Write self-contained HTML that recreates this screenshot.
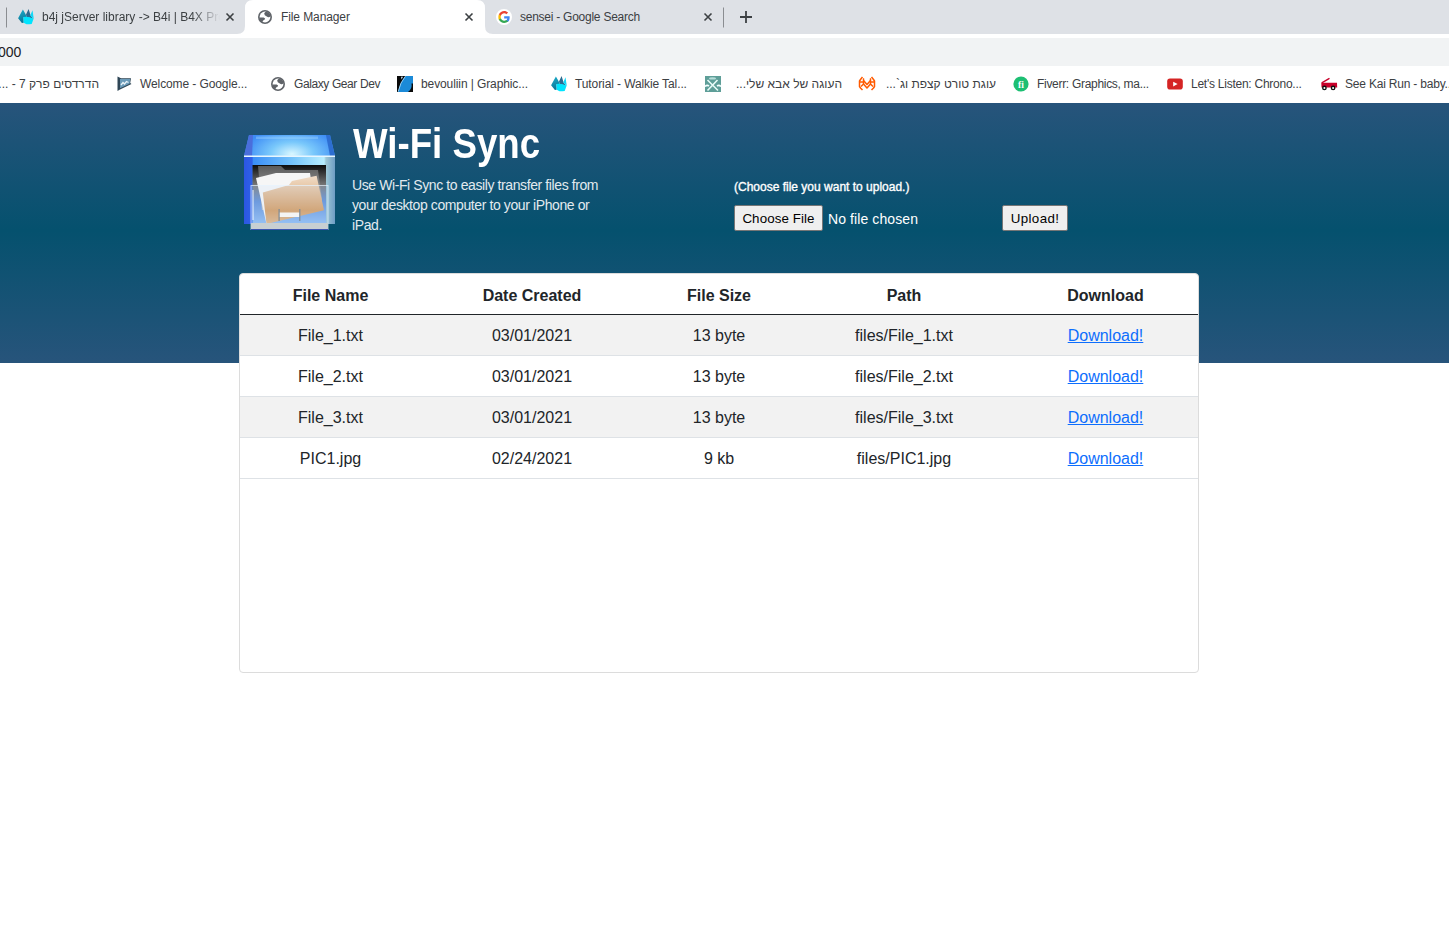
<!DOCTYPE html>
<html><head><meta charset="utf-8">
<style>
*{margin:0;padding:0;box-sizing:border-box}
html,body{width:1449px;height:930px;overflow:hidden;background:#fff;font-family:"Liberation Sans",sans-serif}
.abs{position:absolute;white-space:nowrap}
svg.abs{overflow:visible}
#tabs{position:absolute;left:0;top:0;width:1449px;height:34px;background:#dee1e6}
#addr{position:absolute;left:0;top:38px;width:1449px;height:28px;background:#f1f3f4}
.tt{font-size:12px;line-height:14px;color:#3c4043;top:10px}
.bt{font-size:12px;line-height:14px;color:#3c4043;top:77px}
#hdr{position:absolute;left:0;top:103px;width:1449px;height:260px;background:linear-gradient(to bottom,#27547b 0%,#05516e 49%,#27547b 100%)}
#card{position:absolute;left:239px;top:273px;width:960px;height:400px;background:#fff;border:1px solid #dcdcdc;border-radius:4px;overflow:hidden}
table{border-collapse:collapse;width:958px;font-size:16px;color:#212529;table-layout:fixed}
th{font-weight:bold;height:40px;padding-top:4px;text-align:center;vertical-align:middle;border-bottom:1px solid #212529}
td{height:41px;padding-top:3px;text-align:center;vertical-align:middle;border-bottom:1px solid #dee2e6}
tr.s td{background:#f2f2f2}
td a{color:#0d6efd;text-decoration:underline}
.btn{position:absolute;background:#efefef;border:1px solid #767676;border-radius:2px;font-size:13.33px;color:#000;text-align:center;letter-spacing:0.1px}
</style></head><body>
<!-- ===== Chrome tab strip ===== -->
<div id="tabs"></div>
<svg class="abs" style="left:0;top:0" width="1449" height="38" viewBox="0 0 1449 38">
  <rect x="0" y="34" width="1449" height="4" fill="#fff"/>
  <path d="M237,34 Q245,34 245,26 L245,8 Q245,0 253,0 L477,0 Q485,0 485,8 L485,26 Q485,34 493,34 Z" fill="#fff"/>
  <rect x="6" y="7.5" width="1" height="20" fill="#8a8d91"/>
  <rect x="723" y="7.5" width="1" height="20" fill="#8a8d91"/>
  <!-- close icons -->
  <g stroke="#3c4043" stroke-width="1.6" stroke-linecap="butt">
    <path d="M226.5,13.5 L233.5,20.5 M233.5,13.5 L226.5,20.5"/>
    <path d="M465.5,13.5 L472.5,20.5 M472.5,13.5 L465.5,20.5"/>
    <path d="M704.5,13.5 L711.5,20.5 M711.5,13.5 L704.5,20.5"/>
  </g>
  <path d="M746,11 V23 M740,17 H752" stroke="#3c4043" stroke-width="1.8"/>
</svg>
<!-- tab favicons -->
<svg class="abs" style="left:18px;top:9px" width="16" height="16" viewBox="0 0 16 16">
  <defs><linearGradient id="fl" x1="0" x2="0.3" y1="0" y2="1"><stop offset="0" stop-color="#1cb2cf"/><stop offset="1" stop-color="#0b7597"/></linearGradient></defs>
  <path d="M10.6,0 L8,5.4 L8.6,8.2 L15.4,9.8 L12.7,6.7 Z" fill="#2d6b90"/>
  <path d="M14.5,1.3 L12.2,6.5 L15.8,10.1 Z" fill="#10d8f8"/>
  <path d="M4.9,0.5 L7.5,5.1 L8.6,8 L5.5,8.2 L5.7,13.7 L3.9,13.9 L0.1,9.3 Z" fill="url(#fl)"/>
  <path d="M5.4,8 Q11,7.3 15.6,9.7 L13.7,15 Q10,15.5 8.5,15.2 L5.7,13.7 Z" fill="#00e4fe"/>
</svg>
<svg class="abs" style="left:258px;top:10px" width="14" height="14" viewBox="0 0 14 14">
  <circle cx="7" cy="7" r="7" fill="#5f6368"/>
  <circle cx="7" cy="7" r="5.4" fill="#fff"/>
  <path d="M6.2,3.6 Q6.6,2.3 8.6,1.6 L12.8,4.3 L12.6,6.2 Q11.4,7.4 10.2,7.2 Q9,6.5 8.4,6.2 Q6.3,5.8 6.2,3.6Z" fill="#5f6368"/>
  <path d="M1.4,7.5 L5.6,7.4 Q7.3,8.1 7.1,9.1 Q6.6,10.1 5.2,10.4 Q4.3,11 4.4,12.8 L1.8,11.2 Z" fill="#5f6368"/>
</svg>
<svg class="abs" style="left:496px;top:9px" width="16" height="16" viewBox="0 0 16 16">
  <circle cx="8" cy="8" r="8" fill="#fff"/>
  <g transform="translate(8,8) scale(1.12) translate(-7.85,-7.65)">
  <path d="M12.9,8.1 c0-.4 0-.8-.1-1.1 H8 v2.1 h2.8 c-.1.7-.5 1.2-1 1.6 v1.3 h1.7 c1-.9 1.4-2.3 1.4-3.9z" fill="#4285f4"/>
  <path d="M8,13 c1.4,0 2.6-.5 3.5-1.3 l-1.7-1.3 c-.5.3-1.1.5-1.8.5-1.4,0-2.5-.9-2.9-2.2 H3.3 v1.4 C4.2,11.8 6,13 8,13z" fill="#34a853"/>
  <path d="M5.1,8.7 c-.1-.3-.2-.7-.2-1.1 s.1-.7.2-1.1 V5.1 H3.3 C3,5.8 2.8,6.7 2.8,7.6 s.2,1.8.5,2.5 l1.8-1.4z" fill="#fbbc05"/>
  <path d="M8,4.4 c.8,0 1.5.3 2,.8 l1.5-1.5 C10.6,2.8 9.4,2.3 8,2.3 6,2.3 4.2,3.5 3.3,5.1 l1.8,1.4 C5.5,5.3 6.6,4.4 8,4.4z" fill="#ea4335"/>
  </g>
</svg>
<div class="abs tt" style="left:42px;width:178px;overflow:hidden;-webkit-mask-image:linear-gradient(to right,#000 150px,transparent 178px)">b4j jServer library -&gt; B4i | B4X Pro</div>
<div class="abs tt" style="left:281px;letter-spacing:-0.1px">File Manager</div>
<div class="abs tt" style="left:520px;letter-spacing:-0.25px">sensei - Google Search</div>

<!-- ===== address bar ===== -->
<div id="addr"></div>
<div class="abs" style="left:-2px;top:44px;font-size:14px;line-height:16px;color:#202124">000</div>

<!-- ===== bookmarks bar ===== -->
<div class="abs bt" style="left:-2px;width:101px;text-align:right;direction:rtl">הדרדסים פרק 7 - ...</div>
<svg class="abs" style="left:117px;top:76px" width="16" height="16" viewBox="0 0 16 16">
  <path d="M0.5,0.5 L4,2.2 L14,2.2 L13.2,7 L14.5,8 L3,13.5 L0.5,15 Z" fill="#2f4656"/>
  <path d="M3,3 L13.2,3 L12.6,7.8 L3,12.3 Z" fill="#6a9ab8"/>
  <path d="M4,9 L6,6.5 L7.5,8 L9.5,5.5 L11.5,6.5" stroke="#e8f2f8" stroke-width="1.3" fill="none"/>
</svg>
<div class="abs bt" style="left:140px;letter-spacing:-0.1px">Welcome - Google...</div>
<svg class="abs" style="left:271px;top:77px" width="14" height="14" viewBox="0 0 14 14">
  <circle cx="7" cy="7" r="7" fill="#5f6368"/>
  <circle cx="7" cy="7" r="5.4" fill="#fff"/>
  <path d="M6.2,3.6 Q6.6,2.3 8.6,1.6 L12.8,4.3 L12.6,6.2 Q11.4,7.4 10.2,7.2 Q9,6.5 8.4,6.2 Q6.3,5.8 6.2,3.6Z" fill="#5f6368"/>
  <path d="M1.4,7.5 L5.6,7.4 Q7.3,8.1 7.1,9.1 Q6.6,10.1 5.2,10.4 Q4.3,11 4.4,12.8 L1.8,11.2 Z" fill="#5f6368"/>
</svg>
<div class="abs bt" style="left:294px;letter-spacing:-0.4px">Galaxy Gear Dev</div>
<svg class="abs" style="left:397px;top:76px" width="16" height="16" viewBox="0 0 16 16">
  <rect width="16" height="16" fill="#0a0a0a"/>
  <path d="M8.5,0 L16,0 L16,7.5 L14.5,7.5 Q15.5,13 11,16 L1,16 Q3,6 8.5,0Z" fill="#1b8ad8"/>
  <path d="M1.2,15.6 Q3.2,6.2 8.4,0.3" stroke="#bfe6ff" stroke-width="0.8" fill="none"/>
  <path d="M4,0.8 L6,0.8 L4.5,3.5Z" fill="#cfe7f7"/>
</svg>
<div class="abs bt" style="left:421px;letter-spacing:-0.1px">bevouliin | Graphic...</div>
<svg class="abs" style="left:551px;top:76px" width="16" height="16" viewBox="0 0 16 16">
  <defs><linearGradient id="fl" x1="0" x2="0.3" y1="0" y2="1"><stop offset="0" stop-color="#1cb2cf"/><stop offset="1" stop-color="#0b7597"/></linearGradient></defs>
  <path d="M10.6,0 L8,5.4 L8.6,8.2 L15.4,9.8 L12.7,6.7 Z" fill="#2d6b90"/>
  <path d="M14.5,1.3 L12.2,6.5 L15.8,10.1 Z" fill="#10d8f8"/>
  <path d="M4.9,0.5 L7.5,5.1 L8.6,8 L5.5,8.2 L5.7,13.7 L3.9,13.9 L0.1,9.3 Z" fill="url(#fl)"/>
  <path d="M5.4,8 Q11,7.3 15.6,9.7 L13.7,15 Q10,15.5 8.5,15.2 L5.7,13.7 Z" fill="#00e4fe"/>
</svg>
<div class="abs bt" style="left:575px;letter-spacing:-0.1px">Tutorial - Walkie Tal...</div>
<svg class="abs" style="left:705px;top:76px" width="16" height="16" viewBox="0 0 16 16">
  <rect width="16" height="16" fill="#5e9e98"/>
  <ellipse cx="7.5" cy="2.4" rx="3.5" ry="1.2" fill="#b5dcd8"/>
  <path d="M2.5,4 L13,14.5 M12.5,4 L2.5,14.5" stroke="#e8fbf8" stroke-width="1.6"/>
  <path d="M0,10.5 Q2,8.5 4,10 M16,10.5 Q14,8.5 12,10" stroke="#f4ffff" stroke-width="1.6" fill="none"/>
</svg>
<div class="abs bt" style="left:-2px;width:844px;text-align:right;direction:rtl">העוגה של אבא שלי...</div>
<svg class="abs" style="left:859px;top:76px" width="16" height="16" viewBox="0 0 16 16">
  <g stroke="#ff5a00" stroke-width="1.5" fill="none" stroke-linejoin="round">
    <path d="M3.5,1 L1.5,3.5 L0.5,5 L0.5,10.5 L1.5,12 L3.5,14"/>
    <path d="M12.5,1 L14.5,3.5 L15.5,5 L15.5,10.5 L14.5,12 L12.5,14"/>
    <path d="M5,2.5 L4.5,3 L4.5,8 L2,10.5 M11,2.5 L11.5,3 L11.5,8 L14,10.5"/>
    <path d="M4.5,4.5 L8,8.5 L11.5,4.5 M4.5,8 L8,12 L11.5,8"/>
    <path d="M1,6 L4.5,6 M15,6 L11.5,6"/>
  </g>
</svg>
<div class="abs bt" style="left:-2px;width:998px;text-align:right;direction:rtl">עוגת טורט קצפת וג`...</div>
<svg class="abs" style="left:1013px;top:76px" width="16" height="16" viewBox="0 0 16 16">
  <circle cx="8" cy="8" r="7.6" fill="#1dbf73"/>
  <text x="8" y="11.5" font-family="Liberation Serif" font-weight="bold" font-size="9.5" fill="#fff" text-anchor="middle">fi</text>
</svg>
<div class="abs bt" style="left:1037px;letter-spacing:-0.3px">Fiverr: Graphics, ma...</div>
<svg class="abs" style="left:1167px;top:77px" width="16" height="14" viewBox="0 0 16 14">
  <rect x="0.2" y="1.6" width="15.6" height="11" rx="2.8" fill="#d52424"/>
  <path d="M6.2,4.7 L10.6,7.1 L6.2,9.5Z" fill="#fff"/>
</svg>
<div class="abs bt" style="left:1191px;letter-spacing:-0.25px">Let's Listen: Chrono...</div>
<svg class="abs" style="left:1321px;top:76px" width="16" height="16" viewBox="0 0 16 16">
  <path d="M1.2,6.6 L8,2.6" stroke="#c8002a" stroke-width="1.4" stroke-linecap="round"/>
  <path d="M0.3,6.8 L16,6.8 L16.2,11.5 L0.5,11.5Z" fill="#c8002a"/>
  <circle cx="3.4" cy="11.9" r="1.7" fill="#fff" stroke="#111" stroke-width="1.4"/>
  <circle cx="12.1" cy="11.9" r="1.7" fill="#fff" stroke="#111" stroke-width="1.4"/>
</svg>
<div class="abs bt" style="left:1345px;letter-spacing:-0.2px">See Kai Run - baby...</div>

<!-- ===== page header ===== -->
<div id="hdr"></div>
<svg class="abs" style="left:240px;top:130px" width="100" height="105" viewBox="240 130 100 105">
  <defs>
    <linearGradient id="gtop" x1="0" x2="1" y1="0" y2="0">
      <stop offset="0" stop-color="#3b8cf6"/><stop offset="0.35" stop-color="#6cc3fb"/><stop offset="0.55" stop-color="#c6f0ff"/><stop offset="0.8" stop-color="#5cb2f9"/><stop offset="1" stop-color="#3d8ef6"/>
    </linearGradient>
    <linearGradient id="gbody" x1="0" x2="1" y1="0" y2="0">
      <stop offset="0" stop-color="#2b56e2"/><stop offset="0.09" stop-color="#2f60e8"/><stop offset="0.1" stop-color="#3a8ef7"/><stop offset="0.55" stop-color="#78c6fb"/><stop offset="0.88" stop-color="#b8eeff"/><stop offset="0.9" stop-color="#9ec8d6"/><stop offset="1" stop-color="#6e9cc4"/>
    </linearGradient>
    <linearGradient id="gopen" x1="0" x2="0" y1="0" y2="1">
      <stop offset="0" stop-color="#0c0c0c"/><stop offset="0.35" stop-color="#7a7a7a"/><stop offset="0.62" stop-color="#5f8fd8"/><stop offset="1" stop-color="#8fbcf2"/>
    </linearGradient>
    <linearGradient id="gfold" x1="0" x2="0" y1="0" y2="1">
      <stop offset="0" stop-color="#f0dcc8"/><stop offset="0.72" stop-color="#d69d62"/><stop offset="1" stop-color="#e0b68a"/>
    </linearGradient>
  </defs>
  <radialGradient id="glid" cx="292" cy="154" r="48" gradientUnits="userSpaceOnUse" gradientTransform="translate(292,154) scale(1,0.55) translate(-292,-154)"><stop offset="0" stop-color="#d9f7ff"/><stop offset="0.45" stop-color="#79c8fb"/><stop offset="1" stop-color="#3d8cf5"/></radialGradient>
  <polygon points="249,135 330,135 335,156 244,156" fill="url(#glid)"/>
  <polygon points="256,136.5 318,136.5 318,139 256,139" fill="#a8dcff" fill-opacity="0.35"/>
  <polygon points="249,135 253,135 252,156 244,156" fill="#4a6edc"/>
  <polygon points="326,135 330,135 335,156 330,156" fill="#2d6ed2"/>
  <rect x="244" y="156" width="91" height="68" fill="url(#gbody)"/>
  <rect x="244" y="155.5" width="91" height="1.5" fill="#e6f6ff"/>
  <rect x="252.5" y="165" width="73.5" height="59" fill="url(#gopen)"/>
  <linearGradient id="ggray" x1="0" x2="0" y1="0" y2="1"><stop offset="0" stop-color="#5a5a5a"/><stop offset="1" stop-color="#c8c8c8"/></linearGradient>
  <polygon points="258,166 281,166 285,170 318,170 322,200 262,210" fill="url(#ggray)"/>
  <polygon points="256,178 276,173 310,173 314,200 266.5,224" fill="#f6f6f6"/>
  <polygon points="262.8,192.4 289,185 292,181 316.6,175.7 324,210.3 266.5,223.9" fill="url(#gfold)"/>
  <rect x="251" y="185.5" width="77" height="44" fill="#bcdcff" fill-opacity="0.16" stroke="#e6f2ff" stroke-opacity="0.7" stroke-width="1"/>
  <rect x="252" y="190" width="2" height="30" fill="#ffffff" fill-opacity="0.45"/>
  <rect x="251" y="223" width="77" height="6.5" fill="#c8cfd2"/>
  <rect x="251" y="229" width="77" height="1" fill="#3d56b0"/>
  <rect x="279" y="212.5" width="21" height="4.5" fill="#f4f4f4"/>
  <rect x="278.5" y="209" width="1.2" height="12" fill="#7d8a96"/>
  <rect x="299.2" y="209" width="1.2" height="12" fill="#7d8a96"/>
</svg>

<div class="abs" id="title" style="left:353px;top:120px;font-size:42px;line-height:48px;font-weight:bold;color:#fff;transform:scaleX(0.873);transform-origin:0 0">Wi-Fi Sync</div>
<div class="abs" style="left:352px;top:175px;font-size:14px;line-height:20px;color:#e2eaef;letter-spacing:-0.4px">Use Wi-Fi Sync to easily transfer files from<br>your desktop computer to your iPhone or<br>iPad.</div>
<div class="abs" style="left:734px;top:180px;font-size:12px;line-height:14px;color:#fff;-webkit-text-stroke:0.35px #fff">(Choose file you want to upload.)</div>
<div class="btn" style="left:734px;top:205px;width:89px;height:26px;line-height:25px">Choose File</div>
<div class="abs" style="left:828px;top:211px;font-size:14px;line-height:16px;color:#fff;letter-spacing:0.1px">No file chosen</div>
<div class="btn" style="left:1002px;top:205px;width:66px;height:26px;line-height:25px;letter-spacing:0.4px">Upload!</div>

<!-- ===== table card ===== -->
<div id="card">
<table>
<colgroup><col style="width:181px"><col style="width:222px"><col style="width:152px"><col style="width:218px"><col style="width:185px"></colgroup>
<thead><tr><th>File Name</th><th>Date Created</th><th>File Size</th><th>Path</th><th>Download</th></tr></thead>
<tbody>
<tr class="s"><td>File_1.txt</td><td>03/01/2021</td><td>13 byte</td><td>files/File_1.txt</td><td><a>Download!</a></td></tr>
<tr><td>File_2.txt</td><td>03/01/2021</td><td>13 byte</td><td>files/File_2.txt</td><td><a>Download!</a></td></tr>
<tr class="s"><td>File_3.txt</td><td>03/01/2021</td><td>13 byte</td><td>files/File_3.txt</td><td><a>Download!</a></td></tr>
<tr><td>PIC1.jpg</td><td>02/24/2021</td><td>9 kb</td><td>files/PIC1.jpg</td><td><a>Download!</a></td></tr>
</tbody></table>
</div>
</body></html>
